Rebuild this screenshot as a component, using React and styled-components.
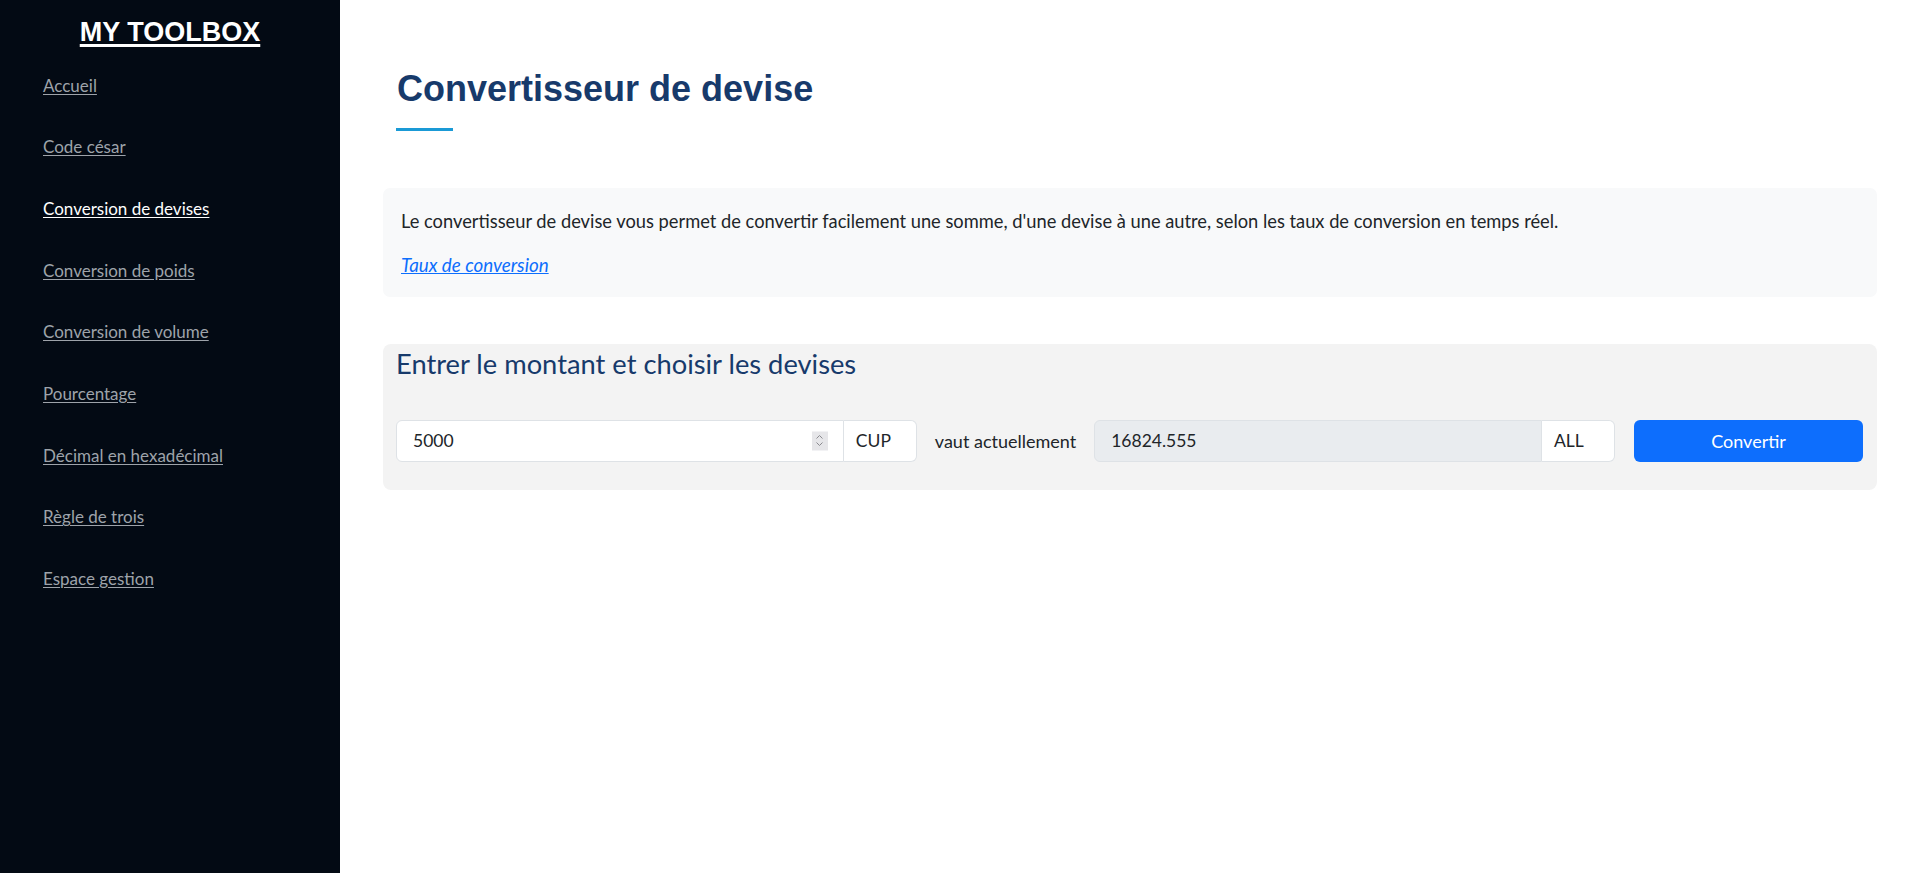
import React from "react";
import styled, { createGlobalStyle } from "styled-components";

const Global = createGlobalStyle`
  html, body { margin: 0; padding: 0; background: #ffffff; }
  body { font-family: Lato, "Open Sans", sans-serif; color: #212529; }
  * { box-sizing: border-box; }
`;

const Layout = styled.div`
  display: flex;
  min-height: 873px;
`;

const Sidebar = styled.aside`
  width: 340px;
  flex-shrink: 0;
  background: #030a14;
  display: flex;
  flex-direction: column;
`;

const Brand = styled.a`
  align-self: center;
  margin-top: 17px;
  font-family: "Liberation Sans", Arial, sans-serif;
  font-weight: 700;
  font-size: 27px;
  line-height: 31px;
  color: #ffffff;
  text-decoration: underline;
  text-decoration-thickness: 3px;
  text-underline-offset: 3px;
`;

const Nav = styled.nav`
  display: flex;
  flex-direction: column;
  gap: 37.7px;
  padding: 25.5px 0 0 43px;
`;

const NavLink = styled.a`
  font-size: 17px;
  line-height: 24px;
  color: ${(p) => (p.$active ? "#ffffff" : "#9ea3aa")};
  text-decoration: underline;
  text-underline-offset: 2px;
`;

const Main = styled.main`
  flex: 1;
  padding: 67px 40px 0 43px;
`;

const Title = styled.h1`
  margin: 0 0 0 14px;
  font-family: "Liberation Sans", Arial, sans-serif;
  font-weight: 700;
  font-size: 36px;
  line-height: 44px;
  color: #173a6b;
`;

const TitleBar = styled.div`
  width: 57px;
  height: 3px;
  background: #1a9ad6;
  margin: 17px 0 0 13px;
`;

const InfoCard = styled.section`
  margin-top: 57px;
  background: #f8f9fa;
  border-radius: 7px;
  padding: 20px 18px 18.5px;
`;

const Paragraph = styled.p`
  margin: 0 0 18px;
  font-size: 18.3px;
  line-height: 26px;
  color: #212529;
`;

const RateLink = styled.a`
  font-size: 18.8px;
  line-height: 26px;
  font-style: italic;
  color: #0d6efd;
  text-decoration: underline;
`;

const FormCard = styled.section`
  margin-top: 47px;
  background: #f3f3f3;
  border-radius: 8px;
  padding: 2px 14px 28px 13px;
`;

const FormTitle = styled.h2`
  margin: 0;
  font-weight: 400;
  font-size: 27.3px;
  line-height: 36px;
  color: #173a6b;
`;

const Row = styled.div`
  display: flex;
  align-items: center;
  margin-top: 38px;
`;

const Group = styled.div`
  display: flex;
  flex: 1;
  height: 42px;
`;

const Field = styled.div`
  position: relative;
  flex: 1;
  display: flex;
  align-items: center;
  padding: 0 16px;
  font-size: 17.5px;
  color: #212529;
  background: ${(p) => (p.$disabled ? "#e9ecef" : "#ffffff")};
  border: 1px solid #dee2e6;
  border-radius: 6px 0 0 6px;
`;

const Currency = styled.div`
  width: 73px;
  display: flex;
  align-items: center;
  padding: 0 12px;
  font-size: 17.5px;
  color: #212529;
  background: #ffffff;
  border: 1px solid #dee2e6;
  border-left: none;
  border-radius: 0 6px 6px 0;
`;

const Spinner = styled.span`
  position: absolute;
  right: 15px;
  top: 50%;
  transform: translateY(-50%);
  width: 16px;
  height: 19px;
  background: #e6e6e9;
  display: flex;
  align-items: center;
  justify-content: center;
`;

const Between = styled.span`
  flex-shrink: 0;
  padding: 0 18px;
  font-size: 18px;
  color: #212529;
`;

const Button = styled.button`
  flex-shrink: 0;
  width: 229px;
  height: 42px;
  margin-left: 19px;
  border: none;
  border-radius: 6px;
  background: #0d6efd;
  color: #ffffff;
  font-family: inherit;
  font-size: 18px;
`;

const links = [
  "Accueil",
  "Code césar",
  "Conversion de devises",
  "Conversion de poids",
  "Conversion de volume",
  "Pourcentage",
  "Décimal en hexadécimal",
  "Règle de trois",
  "Espace gestion",
];

export default function App() {
  return (
    <>
      <Global />
      <Layout>
        <Sidebar>
          <Brand href="#">MY TOOLBOX</Brand>
          <Nav>
            {links.map((l) => (
              <NavLink key={l} href="#" $active={l === "Conversion de devises"}>
                {l}
              </NavLink>
            ))}
          </Nav>
        </Sidebar>
        <Main>
          <Title>Convertisseur de devise</Title>
          <TitleBar />
          <InfoCard>
            <Paragraph>
              Le convertisseur de devise vous permet de convertir facilement une somme, d'une devise à une autre, selon les taux de conversion en temps réel.
            </Paragraph>
            <RateLink href="#">Taux de conversion</RateLink>
          </InfoCard>
          <FormCard>
            <FormTitle>Entrer le montant et choisir les devises</FormTitle>
            <Row>
              <Group>
                <Field>
                  5000
                  <Spinner>
                    <svg width="9" height="14" viewBox="0 0 9 14" fill="none" stroke="#8a8a8f" strokeWidth="1">
                      <path d="M1.5 5 L4.5 2 L7.5 5" />
                      <path d="M1.5 9 L4.5 12 L7.5 9" />
                    </svg>
                  </Spinner>
                </Field>
                <Currency>CUP</Currency>
              </Group>
              <Between>vaut actuellement</Between>
              <Group>
                <Field $disabled>16824.555</Field>
                <Currency>ALL</Currency>
              </Group>
              <Button>Convertir</Button>
            </Row>
          </FormCard>
        </Main>
      </Layout>
    </>
  );
}
